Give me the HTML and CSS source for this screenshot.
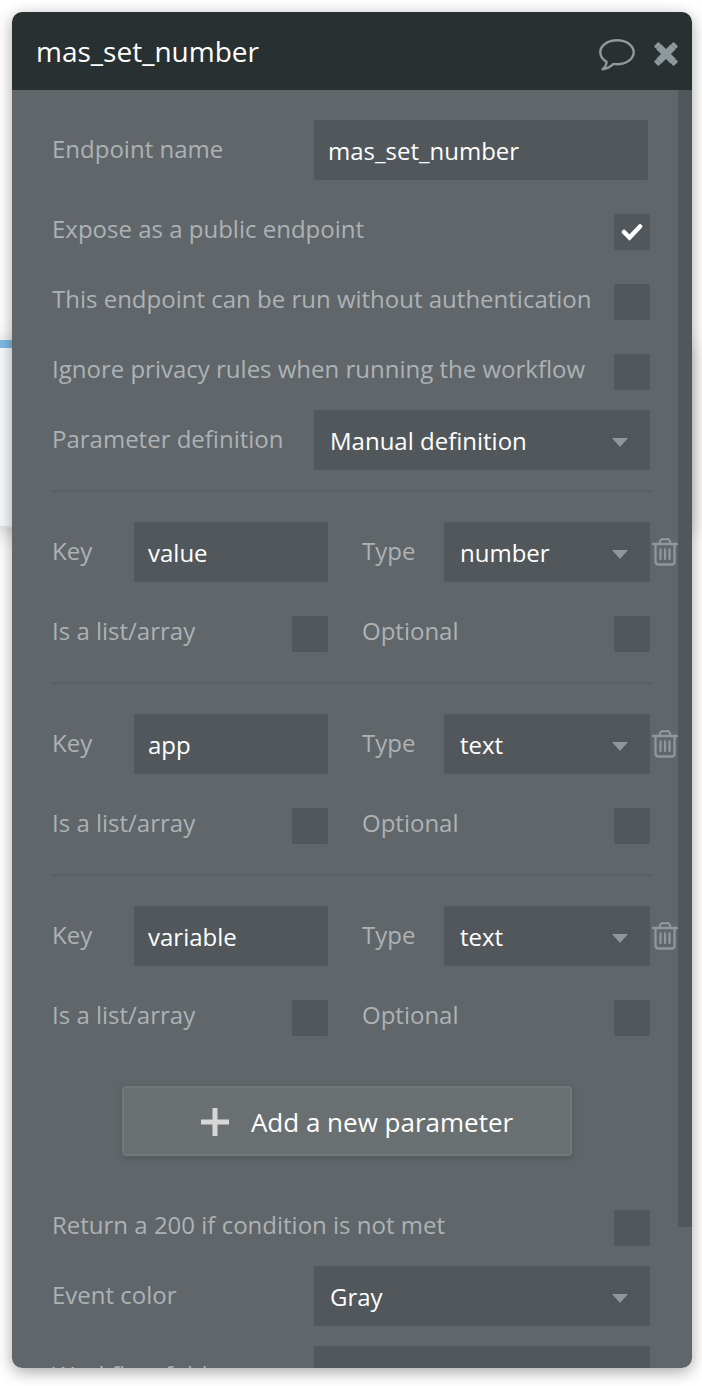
FILE: index.html
```html
<!DOCTYPE html>
<html lang="en">
<head>
    <meta charset="utf-8">
    <title>mas_set_number</title>
    <link rel="stylesheet" href="styles.css">
</head>
<body>
    <div class="canvas-block"></div>

    <svg class="sprite" aria-hidden="true">
        <symbol id="trash" viewBox="0 0 26 28">
            <path d="M1 6h24M7.500 6Q8 1.200 10.500 1.200h5Q18 1.200 18.500 6M3.500 6v17.500q0 3 3 3h13q3 0 3-3V6M8.500 11.500v9.500M13 11.500v9.500M17.500 11.500v9.500" fill="none" stroke="currentColor" stroke-width="2.300" stroke-linecap="round"/>
        </symbol>
    </svg>

    <div class="panel">
        <header class="panel-header">
            <h1>mas_set_number</h1>
            <button class="icon-btn comment" type="button" aria-label="Comment">
                <svg width="36" height="32" viewBox="0 0 36 32">
                    <path d="M18 1.300c9.300 0 16.700 5.200 16.700 12S27.300 25.200 18 25.200c-1.200 0-2.300-.1-3.400-.3-2.800 2.600-6.300 4.800-11 5.400 2.300-1.700 3.800-4.300 4-7.500C3.700 20.600 1.300 17.200 1.300 13.300c0-6.800 7.400-12 16.700-12z" fill="none" stroke="currentColor" stroke-width="2.400" stroke-linejoin="round"/>
                </svg>
            </button>
            <button class="icon-btn" type="button" aria-label="Close">
                <svg width="24" height="24" viewBox="0 0 24 24">
                    <path d="M4.500 4.500l15 15M19.500 4.500l-15 15" stroke="currentColor" stroke-width="7"/>
                    <path d="M4.500 2.200L2.200 4.500M19.500 2.200l2.300 2.300M2.200 19.500l2.300 2.300M21.800 19.500l-2.300 2.300" stroke="currentColor" stroke-width="3.500" stroke-linecap="round"/>
                </svg>
            </button>
        </header>

        <div class="panel-body">
            <form class="form">
                <div class="row">
                    <label for="endpoint">Endpoint name</label>
                    <input class="text-input endpoint" id="endpoint" type="text" value="mas_set_number">
                </div>
                <div class="check-row">
                    <label for="public">Expose as a public endpoint</label>
                    <span class="check">
                        <input id="public" type="checkbox" checked>
                        <svg width="22" height="18" viewBox="0 0 22 18"><path d="M3 9l5.500 5.500L19 3.500" fill="none" stroke="currentColor" stroke-width="4.500" stroke-linecap="round"/></svg>
                    </span>
                </div>
                <div class="check-row">
                    <label for="noauth">This endpoint can be run without authentication</label>
                    <span class="check"><input id="noauth" type="checkbox"></span>
                </div>
                <div class="check-row">
                    <label for="privacy">Ignore privacy rules when running the workflow</label>
                    <span class="check"><input id="privacy" type="checkbox"></span>
                </div>
                <div class="row">
                    <label for="definition">Parameter definition</label>
                    <span class="select"><select id="definition"><option>Manual definition</option></select></span>
                </div>

                <hr class="first">
                <div class="param">
                    <div class="key">
                        <label for="key1">Key</label>
                        <input class="text-input" id="key1" type="text" value="value">
                    </div>
                    <div class="type">
                        <label for="type1">Type</label>
                        <span class="select"><select id="type1"><option>number</option></select></span>
                    </div>
                    <button class="icon-btn trash" type="button" aria-label="Delete value"><svg width="26" height="28"><use href="#trash"/></svg></button>
                    <div class="check-row">
                        <label for="list1">Is a list/array</label>
                        <span class="check"><input id="list1" type="checkbox"></span>
                    </div>
                    <div class="check-row optional">
                        <label for="optional1">Optional</label>
                        <span class="check"><input id="optional1" type="checkbox"></span>
                    </div>
                </div>

                <hr>
                <div class="param">
                    <div class="key">
                        <label for="key2">Key</label>
                        <input class="text-input" id="key2" type="text" value="app">
                    </div>
                    <div class="type">
                        <label for="type2">Type</label>
                        <span class="select"><select id="type2"><option>text</option></select></span>
                    </div>
                    <button class="icon-btn trash" type="button" aria-label="Delete app"><svg width="26" height="28"><use href="#trash"/></svg></button>
                    <div class="check-row">
                        <label for="list2">Is a list/array</label>
                        <span class="check"><input id="list2" type="checkbox"></span>
                    </div>
                    <div class="check-row optional">
                        <label for="optional2">Optional</label>
                        <span class="check"><input id="optional2" type="checkbox"></span>
                    </div>
                </div>

                <hr>
                <div class="param">
                    <div class="key">
                        <label for="key3">Key</label>
                        <input class="text-input" id="key3" type="text" value="variable">
                    </div>
                    <div class="type">
                        <label for="type3">Type</label>
                        <span class="select"><select id="type3"><option>text</option></select></span>
                    </div>
                    <button class="icon-btn trash" type="button" aria-label="Delete variable"><svg width="26" height="28"><use href="#trash"/></svg></button>
                    <div class="check-row">
                        <label for="list3">Is a list/array</label>
                        <span class="check"><input id="list3" type="checkbox"></span>
                    </div>
                    <div class="check-row optional">
                        <label for="optional3">Optional</label>
                        <span class="check"><input id="optional3" type="checkbox"></span>
                    </div>
                </div>

                <button class="add-btn" type="button">
                    <svg width="28" height="28" viewBox="0 0 28 28"><path d="M14 0v28M0 14h28" fill="none" stroke="currentColor" stroke-width="5"/></svg>
                    Add a new parameter
                </button>

                <div class="check-row return-row">
                    <label for="return200">Return a 200 if condition is not met</label>
                    <span class="check"><input id="return200" type="checkbox"></span>
                </div>
                <div class="row">
                    <label for="color">Event color</label>
                    <span class="select"><select id="color"><option>Gray</option></select></span>
                </div>
                <div class="row">
                    <label for="folder">Workflow folder</label>
                    <span class="select"><select id="folder"><option></option></select></span>
                </div>
            </form>
            <div class="scroll-track"><div class="scroll-thumb"></div></div>
        </div>
    </div>
</body>
</html>
```
FILE: styles.css
```css
* {
    box-sizing: border-box;
}
body {
    margin: 0;
    height: 100vh;
    padding: 12px 10px 18px 12px;
    background: #fff;
    font-family: "Open Sans", sans-serif;
    font-size: 24px;
    overflow: hidden;
}
input, select, button {
    font: inherit;
    color: #fff;
    border: none;
    margin: 0;
}
.sprite {
    position: absolute;
    width: 0;
    height: 0;
}

/* workflow block that shows behind the panel */
.canvas-block {
    position: absolute;
    top: 340px;
    left: 0;
    right: 12px;
    height: 188px;
    border-top: 8px solid #7dbbe4;
    border-bottom: 2px solid #e2e6e8;
    background: #f5fafb;
    box-shadow: 0 4px 20px rgba(0,0,0,0.25);
}

.panel {
    position: relative;
    display: flex;
    flex-direction: column;
    height: 100%;
    border-radius: 10px;
    box-shadow: 0 4px 16px rgba(0,0,0,0.35);
    overflow: hidden;
}
.panel-header {
    display: flex;
    align-items: center;
    gap: 19px;
    height: 78px;
    padding: 0 14px 0 24px;
    background: #283032;
}
h1 {
    flex: 1;
    margin: 0;
    font-size: 28px;
    font-weight: 400;
    color: #fff;
}
.icon-btn {
    display: flex;
    padding: 6px 0 0;
    background: none;
    color: #8f989c;
    cursor: pointer;
}
.comment {
    padding-top: 8px;
}

.panel-body {
    flex: 1;
    display: flex;
    min-height: 0;
    background: #60666a;
}
.form {
    flex: 1;
    padding: 30px 28px 0 40px;
    overflow: hidden;
}
.scroll-track {
    width: 14px;
}
.scroll-thumb {
    height: 89%;
    background: #51575b;
}

label {
    padding-bottom: 4px;
    color: #adb2b5;
    white-space: nowrap;
}
.row {
    display: grid;
    grid-template-columns: 262px 1fr;
    align-items: center;
    margin-top: 20px;
}
.row:first-child {
    margin-top: 0;
}
.text-input {
    width: 100%;
    min-width: 0;
    height: 60px;
    padding: 0 14px;
    border-radius: 2px;
    background: #51575b;
}
.endpoint {
    width: calc(100% - 2px);
}
.select {
    position: relative;
    display: block;
}
.select select {
    display: block;
    width: 100%;
    height: 60px;
    padding: 0 40px 0 16px;
    border-radius: 2px;
    background: #51575b;
    appearance: none;
}
.select::after {
    content: "";
    position: absolute;
    top: 28px;
    right: 22px;
    border: 8px solid transparent;
    border-top: 9px solid #90969a;
    border-bottom: none;
    pointer-events: none;
}

.check-row {
    display: flex;
    align-items: center;
    justify-content: space-between;
    height: 36px;
    margin-top: 34px;
}
.check-row label {
    padding-bottom: 8px;
}
.check {
    position: relative;
    width: 36px;
    height: 36px;
}
.check input {
    display: block;
    width: 36px;
    height: 36px;
    border-radius: 2px;
    background: #51575b;
    appearance: none;
}
.check svg {
    position: absolute;
    top: 9px;
    left: 7px;
    color: #fff;
    pointer-events: none;
}

hr {
    height: 2px;
    margin: 30px -2px 30px 0;
    border: none;
    background: #595f62;
}
hr.first {
    margin-top: 20px;
}
.param {
    display: grid;
    grid-template-columns: 276px 1fr 28px;
    margin-right: -28px;
}
.key, .type {
    display: grid;
    grid-template-columns: 82px 1fr;
    align-items: center;
}
.type, .optional {
    margin-left: 34px;
}
.trash {
    align-items: center;
    padding: 0 0 0 2px;
}

.add-btn {
    display: flex;
    align-items: center;
    justify-content: center;
    gap: 22px;
    width: calc(100% - 148px);
    height: 70px;
    margin: 50px 78px 0 70px;
    padding: 2px 0 0 20px;
    border: 2px solid #727779;
    border-radius: 4px;
    background: #6a6f72;
    box-shadow: 0 2px 6px rgba(0,0,0,0.15);
    font-size: 26px;
    cursor: pointer;
}
.add-btn svg {
    color: #d6d6d6;
}
.return-row {
    margin-top: 54px;
}
```
